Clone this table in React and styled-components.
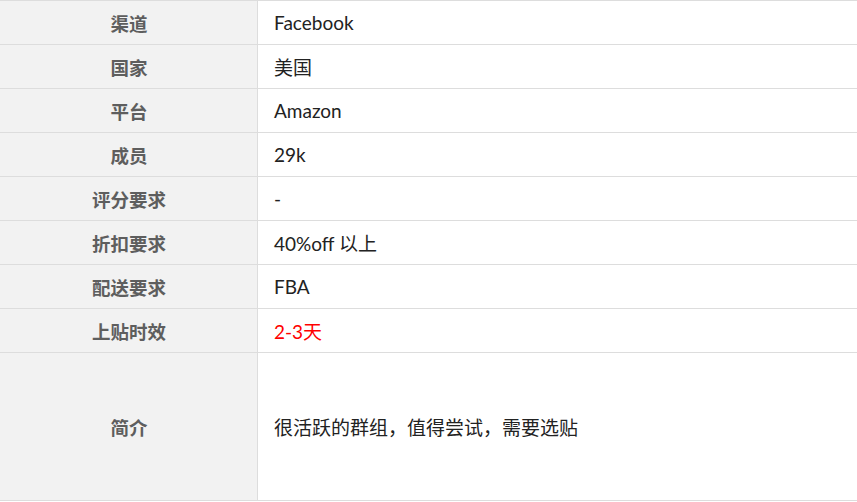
import React from "react";
import styled, { createGlobalStyle } from "styled-components";

const Global = createGlobalStyle`
  html, body { margin: 0; padding: 0; background: #fff; }
  body { font-family: Lato, "Noto Sans CJK SC", sans-serif; }
`;

const Table = styled.div`
  display: grid;
  grid-template-columns: 258px 1fr;
  width: 100%;
  border-top: 1px solid #dddddd;
`;

const Label = styled.div`
  box-sizing: border-box;
  height: ${(p) => p.$h}px;
  background: #f2f2f2;
  border-right: 1px solid #dddddd;
  border-bottom: 1px solid #dddddd;
  display: flex;
  align-items: center;
  justify-content: center;
  font-size: 18.5px;
  font-weight: 700;
  color: #5e5e5e;
  padding-left: 1px;
`;

const Value = styled.div`
  box-sizing: border-box;
  height: ${(p) => p.$h}px;
  border-bottom: 1px solid #dddddd;
  display: flex;
  align-items: center;
  padding-left: 16px;
  font-size: 19px;
  color: ${(p) => (p.$red ? "#ff0000" : "#222222")};
`;

const rows = [
  ["渠道", "Facebook"],
  ["国家", "美国"],
  ["平台", "Amazon"],
  ["成员", "29k"],
  ["评分要求", "-"],
  ["折扣要求", "40%off 以上"],
  ["配送要求", "FBA"],
  ["上贴时效", "2-3天", true],
  ["简介", "很活跃的群组，值得尝试，需要选贴", false, 148],
];

export default function App() {
  return (
    <>
      <Global />
      <Table>
        {rows.map(([k, v, red, h = 44]) => (
          <React.Fragment key={k}>
            <Label $h={h}>{k}</Label>
            <Value $h={h} $red={red}>{v}</Value>
          </React.Fragment>
        ))}
      </Table>
    </>
  );
}
